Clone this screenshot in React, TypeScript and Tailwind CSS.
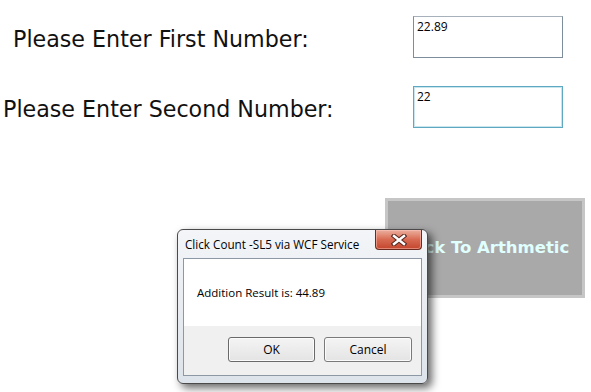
import React from "react";

export default function App() {
  return (
    <div className="relative w-[591px] h-[392px] overflow-hidden bg-white font-['DejaVu_Sans',sans-serif] text-black">
      {/* Row 1 */}
      <div className="flex items-start pt-[16px]">
        <div className="w-[413px] pl-[13px] pt-[10px] text-[22.2px] leading-[26px] text-[#111] whitespace-nowrap">
          Please Enter First Number:
        </div>
        <div className="w-[150px] h-[42px] border border-[#7d8d9c] border-t-[#a7b1bb] bg-white pl-[3px] pt-[2px] text-[12px] leading-[16px] font-['Open_Sans',sans-serif]">
          22.89
        </div>
      </div>
      {/* Row 2 */}
      <div className="flex items-start mt-[28px]">
        <div className="w-[413px] pl-[3px] pt-[10px] text-[22.2px] leading-[26px] text-[#111] whitespace-nowrap">
          Please Enter Second Number:
        </div>
        <div className="w-[150px] h-[42px] border border-[#5ea9c1] shadow-[inset_0_0_0_1px_#c9e6ef] bg-white pl-[3px] pt-[2px] text-[12px] leading-[16px] font-['Open_Sans',sans-serif]">
          22
        </div>
      </div>
      {/* Gray button */}
      <div className="mt-[70px] ml-[385px] w-[200px] h-[100px] border-[3px] border-[#c6c6c6] bg-[#a9a9a9] flex items-center justify-center">
        <span className="font-bold text-[16.5px] text-[#e0ffff] whitespace-nowrap">Back To Arthmetic</span>
      </div>

      {/* Dialog */}
      <div className="absolute left-[177px] top-[229px] w-[251px] h-[155px] rounded-[6px] border border-[#4a4a4a] bg-gradient-to-b from-[#f3f5f8] to-[#dde3ea] shadow-[4px_4px_9px_rgba(0,0,0,0.6)] flex flex-col px-[5px] pb-[7px] font-['Open_Sans',sans-serif]">
        <div className="h-[28px] flex items-center justify-between">
          <span className="pl-[2px] text-[11.7px] leading-[14px] text-black whitespace-nowrap">Click Count -SL5 via WCF Service</span>
          <div className="self-start w-[47px] h-[20px] rounded-b-[4px] border border-t-0 border-[#6b2a1e] bg-gradient-to-b from-[#eab0a0] via-[#d86a52] to-[#c4442c] flex items-center justify-center shadow-[inset_0_0_0_1px_rgba(255,200,190,0.5)]">
            <svg width="16" height="12" viewBox="0 0 16 12">
              <path d="M3 2 L13 10 M13 2 L3 10" stroke="#5a2a22" strokeWidth="4.6" strokeLinecap="square" />
              <path d="M3 2 L13 10 M13 2 L3 10" stroke="#ffffff" strokeWidth="2.4" strokeLinecap="square" />
            </svg>
          </div>
        </div>
        <div className="flex-1 border border-[#8c98a4] flex flex-col">
          <div className="h-[67px] bg-white pl-[13px] flex items-center">
            <span className="text-[11.5px] leading-[14px] whitespace-nowrap">Addition Result is: 44.89</span>
          </div>
          <div className="flex-1 bg-[#f0f0f0] flex justify-end items-start pt-[11px] pr-[9px] gap-[9px]">
            <div className="w-[87px] h-[25px] rounded-[3px] border border-[#6a6a6a] bg-gradient-to-b from-[#f4f4f4] to-[#e4e4e4] shadow-[inset_0_0_0_1px_#fbfbfb] flex items-center justify-center text-[12px]">
              OK
            </div>
            <div className="w-[88px] h-[25px] rounded-[3px] border border-[#7a7a7a] bg-gradient-to-b from-[#f4f4f4] to-[#e4e4e4] shadow-[inset_0_0_0_1px_#fbfbfb] flex items-center justify-center text-[12px]">
              Cancel
            </div>
          </div>
        </div>
      </div>
    </div>
  );
}
